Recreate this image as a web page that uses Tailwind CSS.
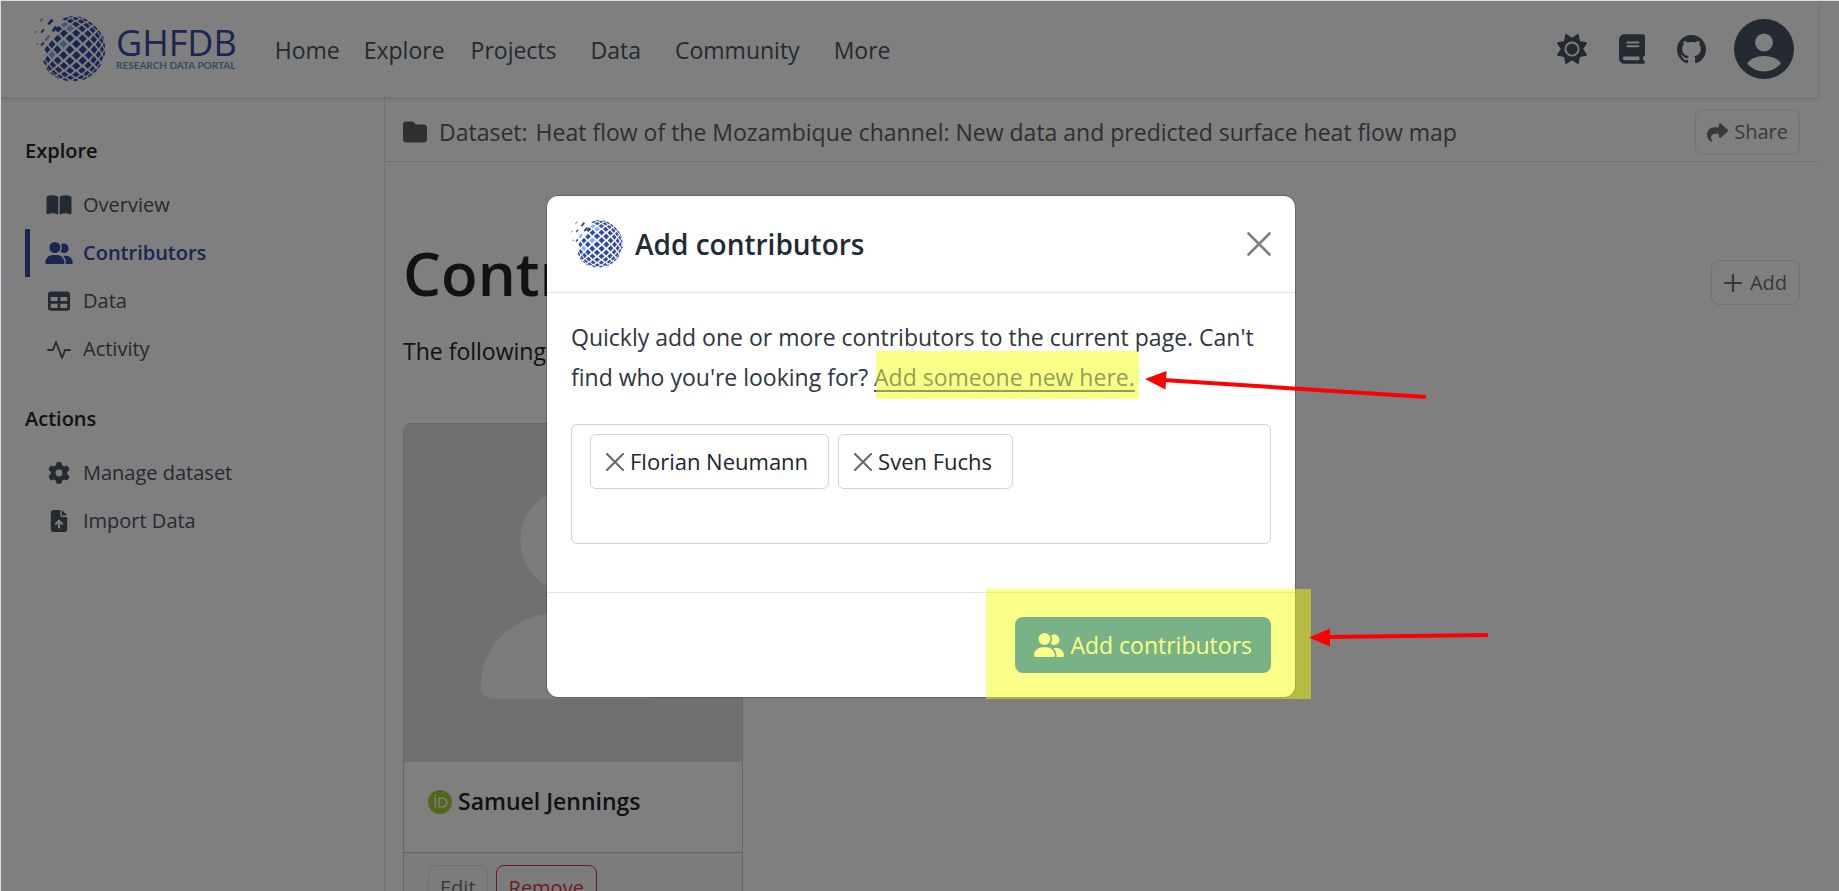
<!DOCTYPE html>
<html lang="en">
<head>
<meta charset="utf-8">
<title>GHFDB – Contributors</title>
<script src="https://cdn.jsdelivr.net/npm/@tailwindcss/browser@4"></script>
</head>
<body class="font-['Open_Sans','Noto_Sans',sans-serif] text-[#212529]">

<svg class="hidden" aria-hidden="true">
  <symbol id="globe" viewBox="-38 -33 71 66"></symbol>
  <symbol id="users" viewBox="0 0 640 512"><path d="M96 128a128 128 0 1 1 256 0A128 128 0 1 1 96 128zM0 482.3C0 383.8 79.8 304 178.3 304h91.4C368.2 304 448 383.8 448 482.3c0 16.4-13.3 29.7-29.7 29.7H29.7C13.3 512 0 498.7 0 482.3zM609.3 512H471.4c5.4-9.4 8.6-20.3 8.6-32v-8c0-60.7-27.1-115.2-69.8-151.8c2.4-.1 4.7-.2 7.1-.2h61.4C567.8 320 640 392.2 640 481.3c0 17-13.8 30.7-30.7 30.7zM432 256c-31 0-59-12.6-79.3-32.9C372.4 196.5 384 163.6 384 128c0-26.8-6.6-52.1-18.3-74.3C384.3 40.1 407.2 32 432 32c61.9 0 112 50.1 112 112s-50.1 112-112 112z"/></symbol>
</svg>
<script>
  // Globe of diamond tiles: a diamond lattice projected onto a sphere, plus loose tiles at the upper left.
  (function () {
    var R = 33, PX = 0.2, PY = 0.175, H = 0.135, out = '', tiles = [];
    function map(a, b) {
      var r = Math.hypot(a, b);
      if (r > 1.5) { a *= 1.5 / r; b *= 1.5 / r; r = 1.5; }
      var k = r ? R * Math.sin(r) / r : R;
      return [a * k, b * k];
    }
    function poly(pts, color) {
      out += '<polygon fill="' + color + '" points="' + pts.map(function (p) { return p[0].toFixed(2) + ',' + p[1].toFixed(2); }).join(' ') + '"/>';
    }
    for (var i = -9; i <= 9; i++) for (var j = -9; j <= 9; j++) {
      if ((i + j) % 2) continue;
      var a = i * PX - 0.08, b = j * PY + 0.02, c = map(a, b);
      if (Math.hypot(a, b) > 1.42) continue;
      if (c[0] / R < -0.30 - 0.5 * (c[1] / R + 0.97)) continue;
      tiles.push({ c: c, color: '#344aa4', p: [map(a - H, b), map(a, b - H), map(a + H, b), map(a, b + H)] });
    }
    [[-11, -25], [-3, -20], [-8, -2], [-20, 9]].forEach(function (l) {
      var best = tiles[0], d = 1e9;
      tiles.forEach(function (t) {
        var e = Math.hypot(t.c[0] - l[0], t.c[1] - l[1]);
        if (e < d) { d = e; best = t; }
      });
      best.color = '#7fb8e0';
    });
    tiles.forEach(function (t) { poly(t.p, t.color); });
    [[-31, -29, 2, 1], [-22, -27, 3, 0], [-18, -20, 3, 0], [-30, -18, 2, 0], [-37, -17, 1, 0], [-25, -11, 3, 1], [-35, -5, 1, 0], [-30, -5, 2, 0]].forEach(function (t) {
      var x = t[0], y = t[1], s = t[2];
      poly([[x - s, y + s * .5], [x + s * .3, y - s * 1.1], [x + s, y - s * .5], [x - s * .3, y + s * 1.1]], t[3] ? '#7fb8e0' : '#344aa4');
    });
    document.getElementById('globe').innerHTML = out;
  })();
</script>

<div class="relative h-screen overflow-hidden border-t border-l border-[#cfdfeb] bg-white">
  <!-- Page -->
  <div class="mr-[21px] flex h-full flex-col">
    <header class="relative z-10 flex h-24 shrink-0 items-center bg-white pr-6 pl-[33px] shadow-[0_2px_4px_rgba(0,0,0,0.14)]">
      <a href="#" class="flex items-center gap-2.5">
        <svg class="h-[66px] w-[72px]"><use href="#globe"/></svg>
        <span class="flex flex-col text-[#344aa4]">
          <span class="text-4xl leading-8">GHFDB</span>
          <span class="font-['Lato',sans-serif] text-[10px] leading-3 font-bold text-[#6c93c0]">RESEARCH DATA PORTAL</span>
        </span>
      </a>
      <nav class="ml-[38px] flex gap-[34px] pt-0.5 text-[23px] text-[#495464]">
        <span class="flex gap-6"><a href="#">Home</a><a href="#">Explore</a></span>
        <a href="#" class="-ml-2">Projects</a>
        <a href="#">Data</a>
        <a href="#">Community</a>
        <a href="#">More</a>
      </nav>
      <div class="ml-auto flex items-center gap-8 text-[#495464]">
        <button aria-label="Toggle theme"><svg class="size-[30px]" viewBox="0 0 512 512" fill="currentColor"><path d="M361.5 1.2c5 2.1 8.6 6.6 9.6 11.9L391 121l107.9 19.8c5.3 1 9.8 4.6 11.9 9.6s1.5 10.7-1.6 15.2L446.9 256l62.3 90.3c3.1 4.5 3.7 10.2 1.6 15.2s-6.6 8.6-11.9 9.6L391 391 371.1 498.9c-1 5.3-4.6 9.8-9.6 11.9s-10.7 1.5-15.2-1.6L256 446.9l-90.3 62.3c-4.5 3.1-10.2 3.7-15.2 1.6s-8.6-6.6-9.6-11.9L121 391 13.1 371.1c-5.3-1-9.8-4.6-11.9-9.6s-1.5-10.7 1.6-15.2L65.1 256 2.8 165.7c-3.1-4.5-3.7-10.2-1.6-15.2s6.6-8.6 11.9-9.6L121 121 140.9 13.1c1-5.3 4.6-9.8 9.6-11.9s10.7-1.5 15.2 1.6L256 65.1 346.3 2.8c4.5-3.1 10.2-3.7 15.2-1.6zM160 256a96 96 0 1 1 192 0 96 96 0 1 1 -192 0zm224 0a128 128 0 1 0 -256 0 128 128 0 1 0 256 0z"/></svg></button>
        <a href="#" aria-label="Documentation"><svg class="h-[30px] w-[26px]" viewBox="0 0 448 512" fill="currentColor"><path d="M96 0C43 0 0 43 0 96V416c0 53 43 96 96 96H384h32c17.7 0 32-14.3 32-32s-14.3-32-32-32V384c17.7 0 32-14.3 32-32V32c0-17.7-14.3-32-32-32H384 96zm0 384H352v64H96c-17.7 0-32-14.3-32-32s14.3-32 32-32zm32-240c0-8.8 7.2-16 16-16H336c8.8 0 16 7.2 16 16s-7.2 16-16 16H144c-8.8 0-16-7.2-16-16zm16 48H336c8.8 0 16 7.2 16 16s-7.2 16-16 16H144c-8.8 0-16-7.2-16-16s7.2-16 16-16z"/></svg></a>
        <a href="#" aria-label="GitHub"><svg class="size-[29px]" viewBox="0 0 16 16" fill="currentColor"><path d="M8 0C3.58 0 0 3.58 0 8c0 3.54 2.29 6.53 5.47 7.59.4.07.55-.17.55-.38 0-.19-.01-.82-.01-1.49-2.01.37-2.53-.49-2.69-.94-.09-.23-.48-.94-.82-1.13-.28-.15-.68-.52-.01-.53.63-.01 1.08.58 1.23.82.72 1.21 1.87.87 2.33.66.07-.52.28-.87.51-1.07-1.78-.2-3.64-.89-3.64-3.95 0-.87.31-1.59.82-2.15-.08-.2-.36-1.02.08-2.12 0 0 .67-.21 2.2.82.64-.18 1.32-.27 2-.27s1.36.09 2 .27c1.53-1.04 2.2-.82 2.2-.82.44 1.1.16 1.92.08 2.12.51.56.82 1.27.82 2.15 0 3.07-1.87 3.75-3.65 3.95.29.25.54.73.54 1.48 0 1.07-.01 1.93-.01 2.2 0 .21.15.46.55.38A8.01 8.01 0 0 0 16 8c0-4.42-3.58-8-8-8"/></svg></a>
        <button aria-label="Account" class="-ml-1"><svg class="size-[60px]" viewBox="0 0 60 60"><circle cx="30" cy="30" r="30" fill="currentColor"/><circle cx="30" cy="23.500" r="9" fill="#fff"/><path d="M13 44.500Q18 37 30 37T47 44.500Q40 52.500 30 52.500T13 44.500Z" fill="#fff"/></svg></button>
      </div>
    </header>

    <div class="flex min-h-0 flex-1">
      <aside class="w-96 shrink-0 border-r border-[#dee2e6] pt-10 pl-6 text-xl text-[#495464]">
        <h2 class="font-semibold text-[#212529]">Explore</h2>
        <ul class="mt-4">
          <li><a href="#" class="flex h-12 items-center gap-2.5 pl-5"><svg class="h-5 w-7" viewBox="0 0 576 512" fill="currentColor"><path d="M249.6 471.5c10.8 3.8 22.4-4.100 22.4-15.500V78.600c0-4.200-1.600-8.400-5-11C247.400 52 202.400 32 144 32C93.500 32 46.300 45.300 18.100 56.100C6.800 60.500 0 71.700 0 83.800V454.100c0 11.900 12.800 20.200 24.100 16.500C55.600 460.100 105.500 448 144 448c33.900 0 79 14 105.600 23.500zm76.800 0C353 462 398.100 448 432 448c38.500 0 88.400 12.100 119.900 22.600c11.300 3.800 24.100-4.600 24.100-16.500V83.800c0-12.100-6.800-23.300-18.100-27.600C529.700 45.300 482.500 32 432 32c-58.400 0-103.400 20-123 35.600c-3.300 2.600-5 6.800-5 11V456c0 11.400 11.700 19.300 22.400 15.500z" transform="translate(-32 -28) scale(1.11)"/></svg>Overview</a></li>
          <li><a href="#" aria-current="page" class="flex h-12 items-center gap-2.5 border-l-[5px] border-[#344aa4] pl-[15px] font-semibold text-[#344aa4]"><svg class="h-[22px] w-7" fill="currentColor"><use href="#users"/></svg>Contributors</a></li>
          <li><a href="#" class="flex h-12 items-center gap-2.5 pl-5"><svg class="h-[22px] w-7" viewBox="0 0 512 512" fill="currentColor"><path d="M64 256V160H224v96H64zm0 64H224v96H64V320zm224 96V320H448v96H288zM448 256H288V160H448v96zM64 32C28.700 32 0 60.700 0 96V416c0 35.300 28.700 64 64 64H448c35.300 0 64-28.700 64-64V96c0-35.300-28.700-64-64-64H64z"/></svg>Data</a></li>
          <li><a href="#" class="flex h-12 items-center gap-2.5 pl-5"><svg class="h-6 w-7" viewBox="0 0 28 24" fill="none" stroke="currentColor" stroke-width="1.800" stroke-linecap="round" stroke-linejoin="round"><path d="M3 13H8L11 5L17 21L20 13H25"/></svg>Activity</a></li>
        </ul>
        <h2 class="mt-8 font-semibold text-[#212529]">Actions</h2>
        <ul class="mt-4">
          <li><a href="#" class="flex h-12 items-center gap-2.5 pl-5"><svg class="h-[22px] w-7" viewBox="0 0 512 512" fill="currentColor"><path d="M495.900 166.600c3.200 8.700 .5 18.400-6.400 24.600l-43.300 39.400c1.100 8.300 1.700 16.800 1.700 25.400s-.6 17.100-1.700 25.400l43.300 39.400c6.900 6.200 9.600 15.900 6.400 24.600c-4.400 11.900-9.700 23.300-15.800 34.300l-4.700 8.100c-6.600 11-14 21.400-22.100 31.200c-5.900 7.200-15.700 9.600-24.500 6.800l-55.700-17.700c-13.400 10.300-28.200 18.900-44 25.400l-12.500 57.100c-2 9.100-9 16.300-18.200 17.800c-13.800 2.300-28 3.500-42.500 3.500s-28.700-1.200-42.500-3.500c-9.200-1.500-16.200-8.700-18.200-17.800l-12.500-57.100c-15.800-6.500-30.600-15.100-44-25.400L83.100 425.900c-8.800 2.800-18.600 .3-24.500-6.800c-8.100-9.800-15.500-20.200-22.100-31.200l-4.700-8.100c-6.100-11-11.400-22.400-15.800-34.300c-3.200-8.700-.5-18.400 6.400-24.600l43.300-39.400C64.600 273.100 64 264.600 64 256s.6-17.100 1.700-25.400L22.400 191.200c-6.900-6.200-9.600-15.900-6.400-24.600c4.400-11.900 9.700-23.300 15.800-34.300l4.700-8.100c6.600-11 14-21.400 22.100-31.200c5.900-7.200 15.700-9.600 24.500-6.800l55.700 17.700c13.400-10.300 28.200-18.900 44-25.400l12.500-57.100c2-9.100 9-16.300 18.200-17.800C227.300 1.200 241.500 0 256 0s28.700 1.200 42.500 3.500c9.200 1.500 16.200 8.700 18.200 17.800l12.500 57.100c15.800 6.500 30.600 15.100 44 25.400l55.700-17.700c8.800-2.800 18.600-.3 24.500 6.800c8.100 9.800 15.500 20.200 22.100 31.200l4.700 8.100c6.100 11 11.400 22.400 15.800 34.300zM256 336a80 80 0 1 0 0-160 80 80 0 1 0 0 160z"/></svg>Manage dataset</a></li>
          <li><a href="#" class="flex h-12 items-center gap-2.5 pl-5"><svg class="h-[22px] w-7" viewBox="0 0 384 512" fill="currentColor"><path fill-rule="evenodd" d="M64 0C28.700 0 0 28.700 0 64V448c0 35.300 28.700 64 64 64H320c35.300 0 64-28.700 64-64V160H256c-17.700 0-32-14.300-32-32V0H64zM256 0V128H384L256 0zM216 408c0 13.300-10.700 24-24 24s-24-10.700-24-24V305.900l-31 31c-9.400 9.400-24.600 9.400-33.900 0s-9.400-24.600 0-33.900l72-72c9.400-9.400 24.600-9.400 33.900 0l72 72c9.400 9.400 9.400 24.600 0 33.900s-24.600 9.400-33.900 0l-31-31V408z"/></svg>Import Data</a></li>
        </ul>
      </aside>

      <main class="flex min-w-0 flex-1 flex-col">
        <div class="flex h-[65px] shrink-0 items-center border-b border-[#dee2e6] pt-1.5 pr-[18px] pl-[18px] text-[23px] text-[#5c5e61]">
          <svg class="mr-3 size-6" viewBox="0 0 512 512" fill="currentColor"><path d="M64 480H448c35.300 0 64-28.700 64-64V160c0-35.300-28.700-64-64-64H288c-10.100 0-19.600-4.700-25.600-12.800L243.200 57.600C231.100 41.500 212.100 32 192 32H64C28.700 32 0 60.700 0 96V416c0 35.300 28.700 64 64 64z"/></svg>
          <span class="mr-2">Dataset:</span>
          <span>Heat flow of the Mozambique channel: New data and predicted surface heat flow map</span>
          <button class="ml-auto flex h-[46px] items-center gap-1.5 rounded-lg border border-[#dee2e6] px-[11px] text-xl text-[#6c757d]"><svg class="size-[21px]" viewBox="0 0 512 512" fill="currentColor"><path d="M307 34.800c-11.500 5.100-19 16.600-19 29.200v64H176C78.800 128 0 206.800 0 304C0 417.300 81.500 467.900 100.200 478.100c2.500 1.400 5.300 1.900 8.100 1.900c10.900 0 19.700-8.900 19.700-19.700c0-7.500-4.300-14.400-9.800-19.500C108.800 431.900 96 414.400 96 384c0-53 43-96 96-96h96v64c0 12.600 7.400 24.100 19 29.200s25 3 34.400-5.400l160-144c6.700-6.100 10.600-14.700 10.600-23.800s-3.800-17.700-10.600-23.800l-160-144c-9.400-8.500-22.900-10.600-34.400-5.400z"/></svg>Share</button>
        </div>
        <div class="flex min-h-0 flex-1 flex-col px-[18px] pt-[73px]">
          <div class="flex shrink-0 items-end justify-between">
            <h1 class="text-6xl leading-[76px] font-semibold">Contributors</h1>
            <button class="mb-1.5 flex h-[45px] items-center gap-2 rounded-lg border border-[#dee2e6] px-3 text-xl text-[#6c757d]"><svg class="size-[18px]" viewBox="0 0 18 18" stroke="currentColor" stroke-width="2.200" stroke-linecap="round"><path d="M9 1V17M1 9H17"/></svg>Add</button>
          </div>
          <p class="mt-[22px] shrink-0 text-[23px] leading-9">The following people have contributed to this dataset.</p>
          <article class="mt-[54px] w-[340px] shrink-0 rounded-lg border border-[#d0d0d0]">
            <svg class="block aspect-square w-full rounded-t-lg bg-[#e1e1e1]" viewBox="0 0 340 340"><circle cx="170" cy="117" r="53" fill="#f8f8f8"/><path d="M90 276C77 276 77 264 77 264C77 222 112 190 157 190H183C228 190 263 222 263 264C263 264 263 276 251 276Z" fill="#f8f8f8"/></svg>
            <div class="flex h-[90px] items-start gap-1.5 px-6 pt-6">
              <svg class="mt-1 size-6 shrink-0" viewBox="0 0 256 256"><circle cx="128" cy="128" r="128" fill="#a6ce39"/><g fill="#fff"><path d="M70 79h16v108H70z"/><path fill-rule="evenodd" d="M109 79h42c40 0 57 28 57 54 0 28-22 54-57 54h-42zM125 94v79h24c35 0 43-27 43-40 0-21-13-39-43-39z"/><circle cx="78" cy="57" r="10"/></g></svg>
              <h3 class="text-[23px] leading-[30px] font-semibold">Samuel Jennings</h3>
            </div>
            <div class="flex gap-2 border-t border-[#c8c8c8] bg-[#f8f8f8] px-6 py-3 text-xl">
              <button class="h-[46px] rounded-lg border border-[#dee2e6] px-[11px] text-[#6c757d]">Edit</button>
              <button class="h-[46px] rounded-lg border border-[#dc3545] px-3 text-[#dc3545]">Remove</button>
            </div>
          </article>
        </div>
      </main>
    </div>
  </div>

  <!-- Backdrop and dialog -->
  <div class="absolute inset-0 z-20 bg-black/50 pt-[194px] pr-4 pl-[18px]">
    <div role="dialog" aria-modal="true" aria-labelledby="dlg-title" class="relative mx-auto w-full max-w-[750px] rounded-xl border border-black/20 bg-white bg-clip-padding text-[#2f3542]">
      <div class="flex h-[97px] items-center border-b border-[#dee2e6] px-6">
        <svg class="mr-3 h-12 w-[52px]"><use href="#globe"/></svg>
        <h2 id="dlg-title" class="text-[28px] font-semibold text-[#212b36]">Add contributors</h2>
        <button aria-label="Close" class="ml-auto"><svg class="size-6" viewBox="0 0 24 24" stroke="#808080" stroke-width="2.600" stroke-linecap="round"><path d="M1.500 1.500L22.500 22.500M22.500 1.500L1.500 22.500"/></svg></button>
      </div>
      <div class="px-6 pt-6 pb-12">
        <p class="text-[23px] leading-10">Quickly add one or more contributors to the current page. Can't find who you're looking for? <a href="#" class="text-[#344aa4] underline decoration-2 underline-offset-4">Add someone new here.</a></p>
        <div class="mt-[27px] flex h-[120px] flex-wrap content-start items-center gap-[9px] rounded-md border border-[#ced4da] px-[18px] py-[9px] text-[22px] text-[#212529]">
          <span class="flex h-[55px] items-center gap-1.5 rounded-md border border-[#ced4da] pr-5 pl-[15px]"><button aria-label="Remove Florian Neumann"><svg class="size-[18px]" viewBox="0 0 18 18" stroke="#666" stroke-width="2" stroke-linecap="round"><path d="M1 1L17 17M17 1L1 17"/></svg></button>Florian Neumann</span>
          <span class="flex h-[55px] items-center gap-1.5 rounded-md border border-[#ced4da] pr-5 pl-[15px]"><button aria-label="Remove Sven Fuchs"><svg class="size-[18px]" viewBox="0 0 18 18" stroke="#666" stroke-width="2" stroke-linecap="round"><path d="M1 1L17 17M17 1L1 17"/></svg></button>Sven Fuchs</span>
          <input type="text" aria-label="Search contributors" class="h-9 w-full outline-none">
        </div>
      </div>
      <div class="flex justify-end border-t border-[#dee2e6] p-6">
        <button class="flex h-14 items-center gap-1.5 rounded-lg bg-[#0d6efd] px-[19px] text-[23px] text-white"><svg class="h-6 w-[30px]" fill="currentColor"><use href="#users"/></svg>Add contributors</button>
      </div>

      <!-- Annotations: marker highlights and arrows -->
      <svg class="pointer-events-none absolute top-0 left-0 h-[501px] w-[748px] overflow-visible">
        <g fill="#f5ff00" fill-opacity="0.470"><rect x="329" y="155" width="263" height="48"/><rect x="439" y="393" width="325" height="110"/></g>
        <g stroke="#f00" stroke-width="4"><path d="M616 184L879 201M780 441L941 439"/></g>
        <g fill="#f00"><path d="M598 183L619.500 175L618.500 193.500ZM762 441.500L783 432.500V450.500Z"/></g>
      </svg>
    </div>
  </div>
</div>
</body>
</html>
